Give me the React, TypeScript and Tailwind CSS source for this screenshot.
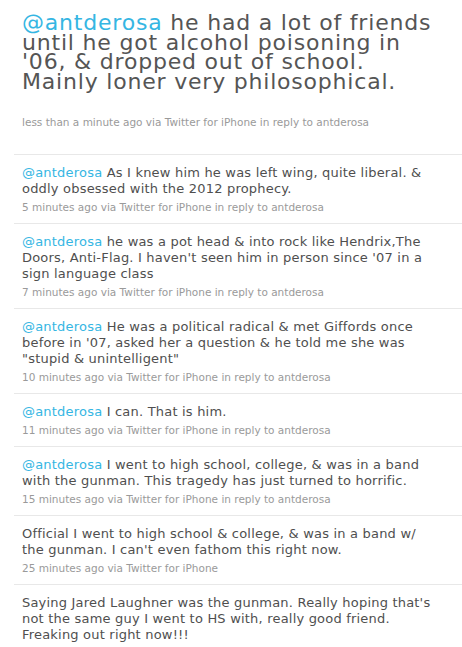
const tweets = [
  {
    reply: true,
    text: "As I knew him he was left wing, quite liberal. & oddly obsessed with the 2012 prophecy.",
    meta: "5 minutes ago via Twitter for iPhone in reply to antderosa",
  },
  {
    reply: true,
    text: "he was a pot head & into rock like Hendrix,The Doors, Anti-Flag. I haven't seen him in person since '07 in a sign language class",
    meta: "7 minutes ago via Twitter for iPhone in reply to antderosa",
  },
  {
    reply: true,
    text: 'He was a political radical & met Giffords once before in \'07, asked her a question & he told me she was "stupid & unintelligent"',
    meta: "10 minutes ago via Twitter for iPhone in reply to antderosa",
  },
  {
    reply: true,
    text: "I can. That is him.",
    meta: "11 minutes ago via Twitter for iPhone in reply to antderosa",
  },
  {
    reply: true,
    text: "I went to high school, college, & was in a band with the gunman. This tragedy has just turned to horrific.",
    meta: "15 minutes ago via Twitter for iPhone in reply to antderosa",
  },
  {
    reply: false,
    text: "Official I went to high school & college, & was in a band w/ the gunman. I can't even fathom this right now.",
    meta: "25 minutes ago via Twitter for iPhone",
  },
  {
    reply: false,
    text: "Saying Jared Laughner was the gunman. Really hoping that's not the same guy I went to HS with, really good friend. Freaking out right now!!!",
    meta: "",
  },
];

function Tweet({ reply, text, meta }: { reply: boolean; text: string; meta: string }) {
  return (
    <div className="border-t border-[#e8e8e8] pl-2 pr-6 pt-[10px] pb-[9px]">
      <p className="text-[13px] leading-[16px] tracking-[0.2px] text-[#4f4f4f]">
        {reply && (
          <>
            <span className="text-[#35b6e3]">@antderosa</span>{" "}
          </>
        )}
        {text}
      </p>
      {meta && (
        <p className="mt-[3px] text-[10.5px] leading-[14px] text-[#9a9a9a]">{meta}</p>
      )}
    </div>
  );
}

export default function App() {
  return (
    <div
      className="w-[462px] h-[647px] overflow-hidden bg-white flex flex-col"
      style={{ fontFamily: '"DejaVu Sans", "Lucida Grande", sans-serif' }}
    >
      <div className="pl-[22px] pt-[13px] pb-[25px]">
        <p className="whitespace-nowrap text-[22px] leading-[19.5px] tracking-[0.8px] text-[#555555]">
          <span className="text-[#35b6e3]">@antderosa</span> he had a lot of friends
          <br />
          until he got alcohol poisoning in
          <br />
          '06, &amp; dropped out of school.
          <br />
          Mainly loner very philosophical.
        </p>
        <p className="mt-[24px] text-[10.5px] leading-[14px] text-[#9a9a9a]">
          less than a minute ago via Twitter for iPhone in reply to antderosa
        </p>
      </div>
      <div className="ml-[14px] flex-1 flex flex-col">
        {tweets.map((t, i) => (
          <Tweet key={i} {...t} />
        ))}
      </div>
      <div className="h-[2px] bg-[#8c8c8c] mb-[3px]" />
    </div>
  );
}
